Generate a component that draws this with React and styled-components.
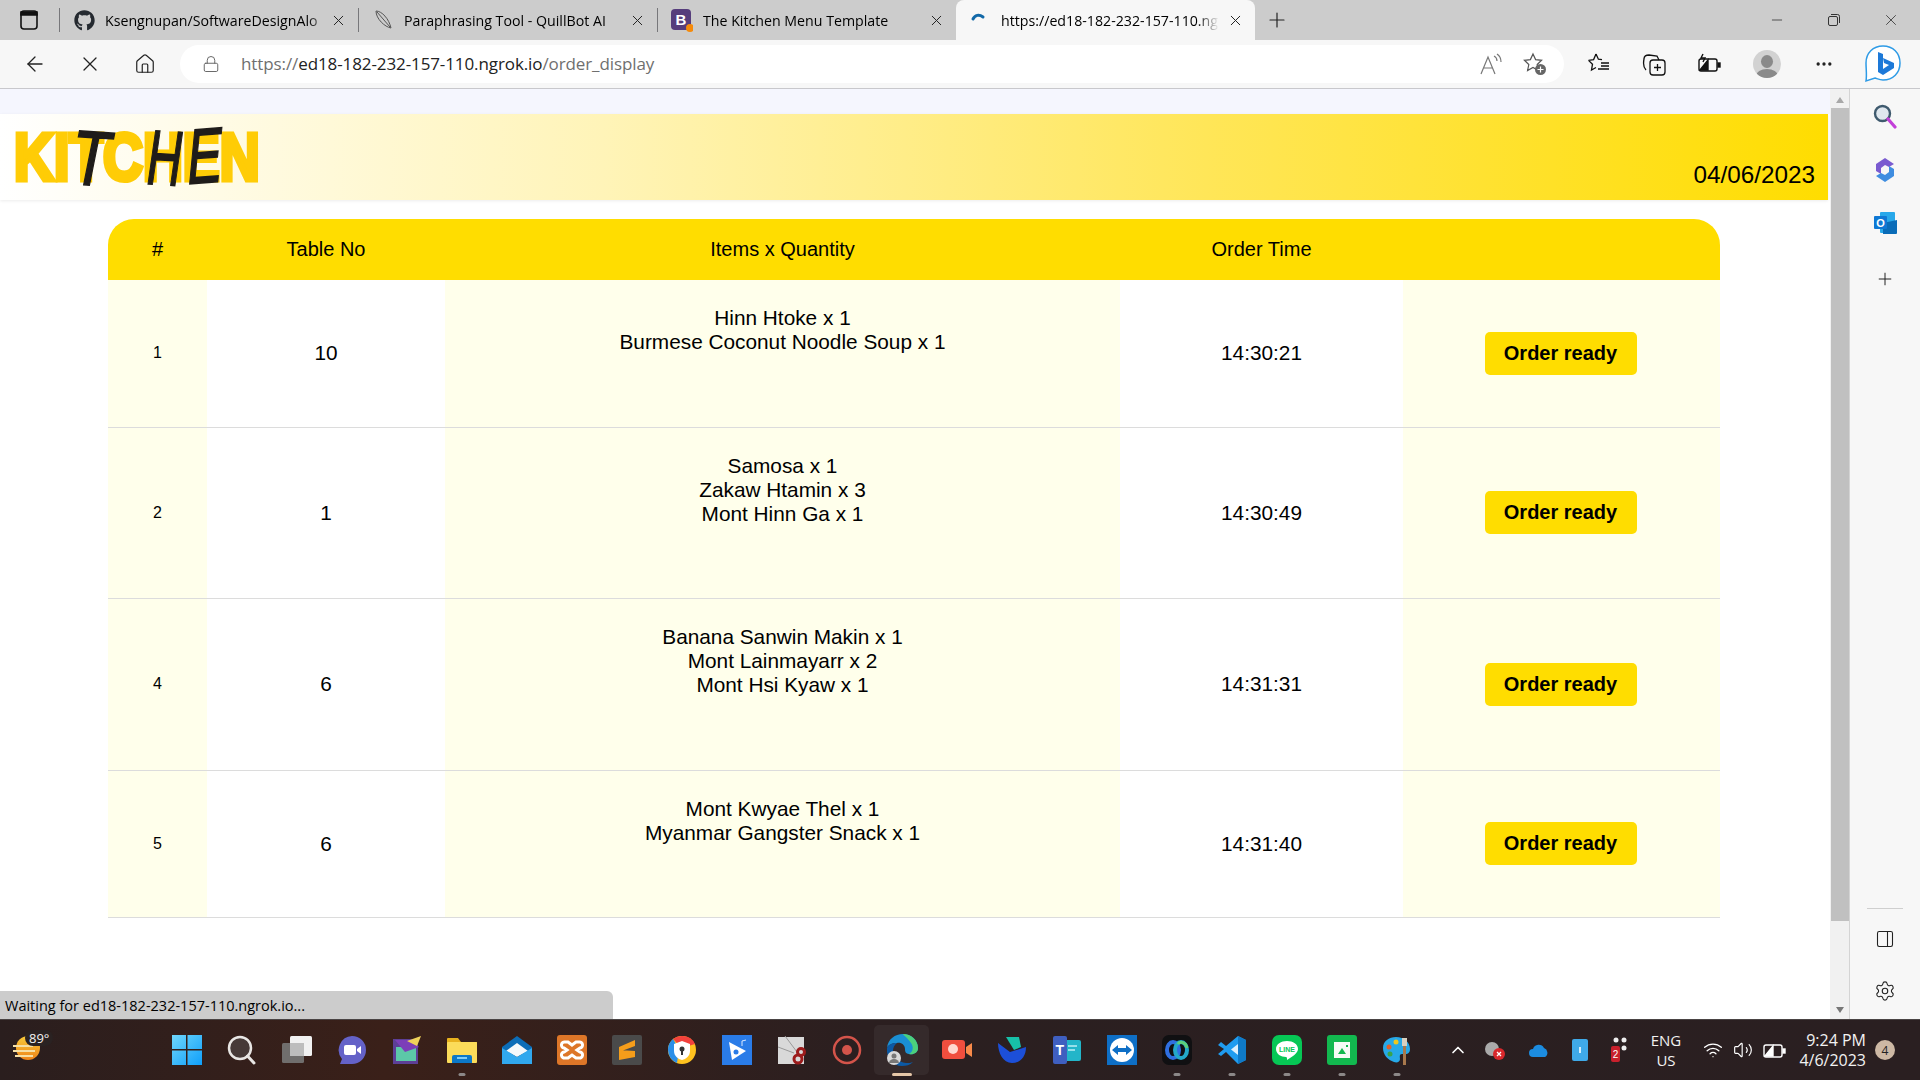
import React from 'react'
import styled, { createGlobalStyle } from 'styled-components'
import { FaGithub } from 'react-icons/fa'
import { ArrowLeft, ChevronUp, House, Lock, Minus, MoreHorizontal, PanelRight, Plus, Settings, Volume2, Wifi, X } from 'lucide-react'

const GlobalStyle = createGlobalStyle`
  html, body {
    margin: 0;
    overflow: hidden;
  }
  body {
    font-family: 'Liberation Sans', Arial, sans-serif;
    color: #000;
  }
  * {
    box-sizing: border-box;
  }
`

const Screen = styled.div`
  display: flex;
  flex-direction: column;
  height: 1080px;
  width: 1920px;
`

/* browser tabs */
const TabStrip = styled.div`
  align-items: stretch;
  background: #cccccc;
  display: flex;
  flex: 0 0 40px;
  font-family: 'Open Sans', sans-serif;
  font-size: 14.2px;
`

const TabPanelButton = styled.div`
  align-items: center;
  display: flex;
  justify-content: center;
  padding-right: 1px;
  width: 59px;
`

const Tab = styled.div`
  align-items: center;
  background: ${({ $active }) => ($active ? '#f7f7f7' : 'transparent')};
  border-left: ${({ $active }) => ($active ? 'none' : '1px solid #77777a')};
  border-radius: ${({ $active }) => ($active ? '8px 8px 0 0' : '0')};
  display: flex;
  margin: ${({ $active }) => ($active ? '0' : '8px 0')};
  padding: 0 11px 0 13px;
  width: 299px;
`

const TabIcon = styled.div`
  align-items: center;
  display: flex;
  flex: 0 0 22px;
  height: 22px;
  justify-content: center;
  margin-right: 10px;
  position: relative;
`

const TabTitle = styled.div`
  flex: 1;
  margin-right: ${({ $narrow }) => ($narrow ? '8px' : '0')};
  overflow: hidden;
  white-space: nowrap;
  -webkit-mask-image: linear-gradient(to right, #000 90%, transparent 100%);
  mask-image: linear-gradient(to right, #000 90%, transparent 100%);
`

const NewTab = styled.div`
  align-items: center;
  display: flex;
  justify-content: center;
  margin-left: 4px;
  width: 36px;
`

const WindowControls = styled.div`
  align-items: center;
  display: flex;
  margin-left: auto;
  padding-right: 1px;
`

const WindowButton = styled.div`
  align-items: center;
  display: flex;
  justify-content: center;
  width: 57px;
`

/* address bar row */
const Toolbar = styled.div`
  align-items: center;
  background: #f7f7f7;
  border-bottom: 1px solid #c8c8cc;
  display: flex;
  flex: 0 0 49px;
  padding-bottom: 1px;
`

const NavButton = styled.div`
  align-items: center;
  display: flex;
  justify-content: center;
  margin-left: ${({ $first }) => ($first ? '7px' : '0')};
  width: 55px;
`

const AddressBar = styled.div`
  align-items: center;
  background: #fff;
  border-radius: 19px;
  display: flex;
  font-family: 'Open Sans', sans-serif;
  font-size: 17px;
  height: 38px;
  margin-left: 8px;
  padding: 0 14px 0 22px;
  width: 1384px;
`

const Url = styled.div`
  color: #6f6f6f;
  flex: 1;
  letter-spacing: -0.1px;
  margin-left: 21px;
  white-space: nowrap;
  b {
    color: #222;
    font-weight: 400;
  }
`

const BarIcon = styled.div`
  align-items: center;
  display: flex;
  justify-content: center;
  margin-left: ${({ $gap }) => $gap || 0}px;
  width: 30px;
`

const ToolIcons = styled.div`
  align-items: center;
  display: flex;
  margin-left: 7px;
`

const ToolIcon = styled.div`
  align-items: center;
  display: flex;
  justify-content: center;
  width: ${({ $width }) => $width || 55}px;
`

const Avatar = styled.div`
  background: #d2d2d2;
  border-radius: 50%;
  height: 28px;
  overflow: hidden;
  position: relative;
  width: 28px;
  &::before {
    background: #8a8a8a;
    border-radius: 50%;
    content: '';
    height: 13px;
    left: 8px;
    position: absolute;
    top: 5px;
    width: 12px;
  }
  &::after {
    background: #8a8a8a;
    border-radius: 50%;
    content: '';
    height: 14px;
    left: 3px;
    position: absolute;
    top: 19px;
    width: 22px;
  }
`

/* middle part: page, scrollbar, edge sidebar */
const Body = styled.div`
  display: flex;
  flex: 1;
  min-height: 0;
`

const Viewport = styled.div`
  background: #fff;
  flex: 0 0 1830px;
  overflow: hidden;
  position: relative;
`

const TopBand = styled.div`
  background: #f5f6fe;
  height: 25px;
`

const PageHeader = styled.header`
  align-items: flex-end;
  background: linear-gradient(to right, #ffffff 0%, #fff4b8 33%, #ffe658 66%, #ffdd00 100%);
  box-shadow: 0 1px 3px rgba(0, 0, 0, 0.08);
  display: flex;
  height: 86px;
  justify-content: space-between;
  padding: 0 13px 11px 14px;
  width: 1828px;
`

const Logo = styled.div`
  height: 86px;
  margin-bottom: -11px;
  position: relative;
  width: 246px;
`

const LogoWord = styled.div`
  color: #ffcc06;
  -webkit-text-stroke: 5px #ffcc06;
  font-size: 67px;
  font-weight: 700;
  left: 0;
  line-height: 48px;
  position: absolute;
  top: 19px;
  transform: scaleX(0.825);
  transform-origin: left top;
  white-space: nowrap;
`

const LogoLetter = styled.span`
  color: #1f1c1a;
  -webkit-text-stroke: 1.5px #1f1c1a;
  font-size: 78px;
  font-style: italic;
  left: ${({ $left }) => $left}px;
  line-height: 60px;
  position: absolute;
  top: 13px;
  transform: scaleX(${({ $squash }) => $squash}) rotate(${({ $turn }) => $turn}deg);
  transform-origin: left center;
`

const DateText = styled.div`
  font-size: 24.3px;
  line-height: 28px;
`

const OrdersTable = styled.table`
  border-collapse: collapse;
  font-size: 20px;
  margin: 19px 0 0 108px;
  table-layout: fixed;
  width: 1612px;
`

const HeadCell = styled.th`
  background: #ffdd00;
  font-weight: 400;
  height: 61px;
  padding: 0;
  text-align: center;
  &:first-child {
    border-top-left-radius: 26px;
  }
  &:last-child {
    border-top-right-radius: 26px;
  }
`

const Row = styled.tr`
  border-bottom: 1px solid #dcdcdc;
`

const Cell = styled.td`
  background: ${({ $tint }) => ($tint ? '#ffffeb' : '#fff')};
  font-size: ${({ $small }) => ($small ? '16px' : '20.8px')};
  padding: 0;
  text-align: center;
`

const ItemsCell = styled(Cell)`
  padding: 26px 0 72.5px;
  vertical-align: top;
`

const ItemLine = styled.div`
  line-height: 24px;
`

const ReadyButton = styled.button`
  background: #ffdd00;
  border: none;
  border-radius: 5px;
  color: #000;
  font-family: 'Liberation Sans', Arial, sans-serif;
  font-size: 20px;
  font-weight: 700;
  height: 43px;
  margin-right: 2px;
  padding: 0;
  width: 152px;
`

const StatusBubble = styled.div`
  align-items: center;
  background: #cccccc;
  border-top-right-radius: 6px;
  bottom: 0;
  display: flex;
  font-family: 'Open Sans', sans-serif;
  font-size: 14.5px;
  height: 28px;
  left: 0;
  padding-left: 5px;
  position: absolute;
  width: 613px;
`

const Scrollbar = styled.div`
  align-items: center;
  background: #f1f1f1;
  display: flex;
  flex: 0 0 19px;
  flex-direction: column;
  padding: 8px 0 6px;
`

const ScrollArrow = styled.div`
  border-left: 4px solid transparent;
  border-right: 4px solid transparent;
  ${({ $down }) => ($down ? 'border-top: 6px solid #777;' : 'border-bottom: 6px solid #a8a8a8;')}
  height: 0;
  width: 0;
`

const ScrollThumb = styled.div`
  background: #c0c0c0;
  height: 813px;
  margin: 5px 0 auto;
  width: 18px;
`

const Sidebar = styled.aside`
  align-items: center;
  background: #f7f7f7;
  border-left: 1px solid #d4d4d4;
  display: flex;
  flex: 1;
  flex-direction: column;
  padding-top: 14px;
`

const SideIcon = styled.div`
  align-items: center;
  display: flex;
  height: 26px;
  justify-content: center;
  margin-bottom: ${({ $gap }) => $gap}px;
  width: 100%;
`

const SideRule = styled.div`
  background: #cfcfcf;
  height: 1px;
  margin: auto 0 17px;
  width: 36px;
`

/* windows taskbar */
const Taskbar = styled.div`
  align-items: center;
  background: linear-gradient(to right, #2a1e1e 0%, #3a2019 20%, #2b1f20 45%, #2a1f21 100%);
  border-top: 1px solid #4a4444;
  color: #f2f2f2;
  display: flex;
  flex: 0 0 60px;
  font-family: 'Open Sans', sans-serif;
  position: relative;
`

const Weather = styled.div`
  flex: 0 0 159px;
  height: 60px;
  padding: 13px 0 0 12px;
  position: relative;
`

const WeatherTemp = styled.span`
  background: #2a2222;
  border-radius: 9px;
  font-size: 13px;
  left: 25px;
  line-height: 16px;
  padding: 0 4px;
  position: absolute;
  top: 10px;
`

const AppSlot = styled.div`
  align-items: center;
  background: ${({ $active }) => ($active ? 'rgba(255,255,255,0.05)' : 'transparent')};
  border-radius: 5px;
  display: flex;
  height: 50px;
  justify-content: center;
  position: relative;
  width: 55px;
`

const RunDot = styled.span`
  background: ${({ $active }) => ($active ? '#e6c7a8' : '#8c8888')};
  border-radius: 2px;
  bottom: -1px;
  height: 3px;
  left: 50%;
  position: absolute;
  transform: translateX(-50%);
  width: ${({ $active }) => ($active ? '20px' : '7px')};
`

const Tray = styled.div`
  align-items: center;
  display: flex;
  margin-left: 24px;
`

const TrayIcon = styled.div`
  align-items: center;
  display: flex;
  justify-content: center;
  width: ${({ $width }) => $width}px;
`

const Lang = styled.div`
  font-size: 15px;
  line-height: 20px;
  margin: 0 12px 0 14px;
  text-align: center;
  width: 40px;
`

const Clock = styled.div`
  font-size: 16px;
  line-height: 20px;
  text-align: right;
  white-space: nowrap;
  width: 76px;
`

const CountBadge = styled.div`
  align-items: center;
  background: #cdb8a4;
  border-radius: 50%;
  color: #222;
  display: flex;
  font-size: 12px;
  height: 20px;
  justify-content: center;
  margin-left: 9px;
  width: 20px;
`

const Win = () => (
  <svg width='30' height='30' viewBox='0 0 30 30'>
    <defs>
      <linearGradient id='win' x1='0' y1='0' x2='1' y2='1'>
        <stop offset='0' stopColor='#6fd6fb' />
        <stop offset='1' stopColor='#0f9ffa' />
      </linearGradient>
    </defs>
    <path fill='url(#win)' d='M0 0h14v14H0zM15.500 0H30v14H15.500zM0 15.500h14V30H0zM15.500 15.500H30V30H15.500z' />
  </svg>
)

const Glass = () => (
  <svg width='30' height='30' viewBox='0 0 30 30'>
    <circle cx='13' cy='13' r='11' fill='#463a38' stroke='#e8e6e4' strokeWidth='2.500' />
    <path d='M20.500 21 27 28' stroke='#e8e6e4' strokeWidth='3' strokeLinecap='round' />
  </svg>
)

const TaskView = () => (
  <svg width='30' height='30' viewBox='0 0 30 30'>
    <rect x='8' y='1' width='22' height='20' rx='1.500' fill='#f1f1f1' />
    <rect x='0' y='8' width='22' height='20' rx='1.500' fill='#777' fillOpacity='0.9' />
    <rect x='8' y='8' width='14' height='13' fill='#bdbdbd' />
  </svg>
)

const Meet = () => (
  <svg width='30' height='30' viewBox='0 0 30 30'>
    <path fill='#6462c8' d='M15 1a14 14 0 0 1 0 28H3l2-5A14 14 0 0 1 15 1z' />
    <rect x='7' y='10' width='12' height='10' rx='2' fill='#fff' />
    <path fill='#fff' d='M20 14l4-3v8l-4-3z' />
  </svg>
)

const PurpleApp = () => (
  <svg width='30' height='30' viewBox='0 0 30 30'>
    <rect x='1' y='4' width='25' height='25' fill='#5d3f96' />
    <rect x='4' y='12' width='20' height='14' fill='#5cc8a8' />
    <path fill='#7c3fb8' d='M3 5h16l8 7-14 5z' />
    <path fill='#f0d25a' d='M15 6l14-5-4 10z' />
  </svg>
)

const Folder = () => (
  <svg width='30' height='30' viewBox='0 0 30 30'>
    <path fill='#e8b21e' d='M0 4a1 1 0 0 1 1-1h10l3 4h16v6H0z' />
    <rect y='7' width='30' height='21' rx='1' fill='#fbdc5a' />
    <path fill='#0b78c8' d='M5 28v-6a2 2 0 0 1 2-2h16a2 2 0 0 1 2 2v6z' />
    <rect x='10' y='22' width='10' height='2' fill='#7fcdf8' />
  </svg>
)

const Mail = () => (
  <svg width='30' height='30' viewBox='0 0 30 30'>
    <path fill='#0c6db8' d='M15 1 30 12v6H0v-6z' />
    <path fill='#f4f8fb' d='M15 8 26 16 15 22 4 16z' />
    <path fill='#31a8ee' d='M0 13l15 9 15-9v16H0z' />
  </svg>
)

const Xampp = () => (
  <svg width='30' height='30' viewBox='0 0 30 30'>
    <rect width='30' height='30' rx='3' fill='#dd7628' />
    <path fill='none' stroke='#fff' strokeWidth='3' d='M8 7h3l4 3 4-3h3a3 3 0 0 1 1 6l-3 2 3 2a3 3 0 0 1-1 6h-3l-4-3-4 3H8a3 3 0 0 1-1-6l3-2-3-2a3 3 0 0 1 1-6z' />
  </svg>
)

const Sublime = () => (
  <svg width='30' height='30' viewBox='0 0 30 30'>
    <rect width='30' height='30' rx='2' fill='#4a4a4a' />
    <path fill='#f59d1a' d='M7 12 23 5v6L7 17zM7 17l16 5-16 3v-5zM7 15l16 1v6L7 19z' />
  </svg>
)

const Avast = () => (
  <svg width='30' height='30' viewBox='0 0 30 30'>
    <circle cx='15' cy='15' r='14' fill='#ffc21f' />
    <path fill='#f2413c' d='M15 1a14 14 0 0 1 13 8L15 13 6 4a14 14 0 0 1 9-3z' />
    <path fill='#2b8fe8' d='M1 15A14 14 0 0 1 6 4l6 10-2 14A14 14 0 0 1 1 15z' />
    <path fill='#fff' d='M15 6l8 3v7c0 5-4 8-8 9-4-1-8-4-8-9V9z' />
    <circle cx='15' cy='14' r='2.500' fill='#333' />
    <rect x='14' y='14' width='2' height='6' fill='#333' />
  </svg>
)

const PlayNote = () => (
  <svg width='30' height='30' viewBox='0 0 30 30'>
    <rect width='30' height='30' fill='#2a7ce8' />
    <path fill='#fff' d='M7 7 24 16 10 25z' />
    <circle cx='14' cy='17' r='2.500' fill='#2a7ce8' />
    <path stroke='#dbe9ff' fill='none' d='M20 6v5M20 6l4-1' />
  </svg>
)

const Snip = () => (
  <svg width='30' height='30' viewBox='0 0 30 30'>
    <rect x='1' y='2' width='26' height='27' fill='#d9d9d9' />
    <path stroke='#999' d='M8 1 20 17M1 12l16 6' />
    <circle cx='21' cy='24' r='4' fill='none' stroke='#9c1c1c' strokeWidth='3' />
    <circle cx='24' cy='17' r='3.500' fill='none' stroke='#9c1c1c' strokeWidth='3' />
  </svg>
)

const Target = () => (
  <svg width='30' height='30' viewBox='0 0 30 30'>
    <circle cx='15' cy='15' r='13' fill='none' stroke='#d4544a' strokeWidth='2.500' />
    <circle cx='15' cy='15' r='5' fill='#d4544a' />
  </svg>
)

const Edge = () => (
  <svg width='34' height='34' viewBox='0 0 34 34'>
    <path fill='#1a8fd4' d='M2 15C3 6 10 1 18 1c8 0 15 6 15 14 0 5-5 7-9 6-4 0-4-4-4-5 0-4-4-7-8-6-5 0-9 2-10 5z' />
    <path fill='#4cd07c' d='M18 1c8 0 15 6 15 14 0 5-5 7-9 6 4-2 5-7 2-11-3-5-8-8-8-9z' />
    <path fill='#0c59a4' d='M2 15c1-3 5-5 10-5-3 2-4 5-4 8 0 6 5 11 13 12 3 0 5 0 7-1-3 3-7 4-11 4C8 33 1 25 2 15z' />
    <circle cx='9' cy='25' r='7' fill='#d9d9d9' />
    <circle cx='9' cy='23' r='2.500' fill='#777' />
    <path fill='#777' d='M4 30a5 4 0 0 1 10 0z' />
  </svg>
)

const Rec = () => (
  <svg width='30' height='30' viewBox='0 0 30 30'>
    <rect x='0' y='5' width='23' height='19' rx='3' fill='#f04e3e' />
    <path fill='#f88a4a' d='M24 12l6-4v14l-6-4z' />
    <circle cx='11' cy='14' r='5' fill='#ffd8d0' />
  </svg>
)

const Wing = () => (
  <svg width='30' height='30' viewBox='0 0 30 30'>
    <path fill='#1c4fd8' d='M1 8l12 9 16-5c0 10-6 16-14 16C6 28 1 18 1 8z' />
    <path fill='#17c0a8' d='M9 2h13l2 10-7 3z' />
  </svg>
)

const TeamsBook = () => (
  <svg width='30' height='30' viewBox='0 0 30 30'>
    <rect x='12' y='5' width='17' height='21' rx='2' fill='#23b5c9' />
    <path stroke='#bdeef5' strokeWidth='1.500' d='M16 11h9M16 15h7' />
    <rect x='1' y='1' width='14' height='28' rx='2' fill='#3f5fc0' />
    <text x='3.500' y='20' fontSize='14' fontWeight='700' fill='#fff' fontFamily='Liberation Sans'>T</text>
  </svg>
)

const TeamViewer = () => (
  <svg width='30' height='30' viewBox='0 0 30 30'>
    <rect width='30' height='30' fill='#0e6fc6' />
    <circle cx='15' cy='15' r='12' fill='#fff' />
    <path fill='#0e6fc6' d='M5 15l6-5v3h8v-3l6 5-6 5v-3h-8v3z' />
  </svg>
)

const Webex = () => (
  <svg width='30' height='30' viewBox='0 0 30 30'>
    <rect width='30' height='30' rx='7' fill='#101012' />
    <ellipse cx='11' cy='15' rx='6' ry='8' fill='none' stroke='#2f6fe0' strokeWidth='4' />
    <ellipse cx='19' cy='15' rx='6' ry='8' fill='none' stroke='#23a8c9' strokeWidth='4' />
    <path fill='none' stroke='#5dcf7a' strokeWidth='3' d='M16 9c2-3 8-2 9 4' />
  </svg>
)

const VsCode = () => (
  <svg width='30' height='30' viewBox='0 0 30 30'>
    <path fill='#1f9cf0' d='M21 1l8 4v20l-8 4L9 17l-5 4-3-2 6-5-6-4 3-3 5 4z' />
    <path fill='#0f7ac8' d='M21 1l8 4v20l-8 4z' />
    <path fill='#fff' fillOpacity='0.85' d='M21 9v11l-7-5.500z' />
  </svg>
)

const Line = () => (
  <svg width='30' height='30' viewBox='0 0 30 30'>
    <rect width='30' height='30' rx='7' fill='#06c755' />
    <path fill='#fff' d='M15 6c6 0 11 3 11 8 0 4-6 8-11 11 0-2 0-3-1-3-5 0-10-3-10-8 0-5 5-8 11-8z' />
    <text x='15' y='17' textAnchor='middle' fontSize='7' fontWeight='700' fill='#06c755' fontFamily='Liberation Sans'>LINE</text>
  </svg>
)

const GreenPic = () => (
  <svg width='30' height='30' viewBox='0 0 30 30'>
    <rect width='30' height='30' rx='3' fill='#12b84f' />
    <rect x='7' y='7' width='16' height='16' fill='#f5fbf6' />
    <path fill='#12b84f' d='M11 19l4-6 4 6z' />
    <rect x='19' y='10' width='2' height='2' fill='#12b84f' />
  </svg>
)

const Palette = () => (
  <svg width='30' height='30' viewBox='0 0 30 30'>
    <path fill='#27a9e8' d='M14 2c8 0 14 5 14 12 0 6-5 5-8 5-3 0-2 3-2 5 0 3-3 4-6 3C6 25 1 20 1 13 1 6 7 2 14 2z' />
    <circle cx='7' cy='12' r='2.500' fill='#e0602c' />
    <circle cx='14' cy='7' r='2.500' fill='#f0c81c' />
    <circle cx='8' cy='19' r='2.500' fill='#3aa44a' />
    <rect x='21' y='9' width='3' height='21' fill='#a8784c' />
    <rect x='20' y='3' width='5' height='8' fill='#d8d0c0' />
  </svg>
)

const taskbarApps = [
  { key: 'win', Art: Win },
  { key: 'search', Art: Glass },
  { key: 'view', Art: TaskView },
  { key: 'meet', Art: Meet },
  { key: 'purple', Art: PurpleApp },
  { key: 'folder', Art: Folder, dot: true },
  { key: 'mail', Art: Mail },
  { key: 'xampp', Art: Xampp },
  { key: 'sublime', Art: Sublime },
  { key: 'avast', Art: Avast },
  { key: 'play', Art: PlayNote },
  { key: 'snip', Art: Snip },
  { key: 'target', Art: Target },
  { key: 'edge', Art: Edge, active: true },
  { key: 'rec', Art: Rec },
  { key: 'wing', Art: Wing },
  { key: 'teams', Art: TeamsBook },
  { key: 'tv', Art: TeamViewer },
  { key: 'webex', Art: Webex, dot: true },
  { key: 'code', Art: VsCode, dot: true },
  { key: 'line', Art: Line, dot: true },
  { key: 'green', Art: GreenPic, dot: true },
  { key: 'paint', Art: Palette, dot: true }
]

const orders = [
  { id: 1, table: 10, items: ['Hinn Htoke x 1', 'Burmese Coconut Noodle Soup x 1'], time: '14:30:21' },
  { id: 2, table: 1, items: ['Samosa x 1', 'Zakaw Htamin x 3', 'Mont Hinn Ga x 1'], time: '14:30:49' },
  { id: 4, table: 6, items: ['Banana Sanwin Makin x 1', 'Mont Lainmayarr x 2', 'Mont Hsi Kyaw x 1'], time: '14:31:31' },
  { id: 5, table: 6, items: ['Mont Kwyae Thel x 1', 'Myanmar Gangster Snack x 1'], time: '14:31:40' }
]

const tabs = [
  {
    title: 'Ksengnupan/SoftwareDesignAlo',
    icon: <FaGithub size={21} color='#24292f' />
  },
  {
    title: 'Paraphrasing Tool - QuillBot AI',
    icon: (
      <svg width='20' height='20' viewBox='0 0 20 20' fill='none' stroke='#555'>
        <path d='M3 1c6 0 13 8 15 17C12 17 3 9 3 1zM4 2l13 15' />
      </svg>
    )
  },
  {
    title: 'The Kitchen Menu Template',
    icon: (
      <svg width='22' height='24' viewBox='0 0 22 24'>
        <rect x='0' y='1' width='20' height='21' rx='4' fill='#563d7c' />
        <text x='10' y='17' textAnchor='middle' fontSize='15' fontWeight='700' fill='#fff' fontFamily='Liberation Sans'>B</text>
        <circle cx='19' cy='20' r='4' fill='#f58a0b' />
      </svg>
    )
  }
]

const App = () => (
  <Screen>
    <GlobalStyle />
    <TabStrip>
      <TabPanelButton>
        <svg width='18' height='20' viewBox='0 0 18 20' fill='none' stroke='#111' strokeWidth='1.600'>
          <rect x='1' y='1' width='16' height='18' rx='3' />
          <path d='M1 5h16V2H1z' fill='#111' />
        </svg>
      </TabPanelButton>
      {tabs.map(({ title, icon }) => (
        <Tab key={title}>
          <TabIcon>{icon}</TabIcon>
          <TabTitle>{title}</TabTitle>
          <X size={17} color='#222' strokeWidth={1.4} />
        </Tab>
      ))}
      <Tab $active>
        <TabIcon>
          <svg width='20' height='20' viewBox='0 0 20 20' fill='none'>
            <path d='M3 9c2-4 6-5 10-2' stroke='#1269a8' strokeWidth='3' strokeLinecap='round' />
          </svg>
        </TabIcon>
        <TabTitle $narrow>https://ed18-182-232-157-110.ngrok.io/order_display</TabTitle>
        <X size={17} color='#222' strokeWidth={1.4} />
      </Tab>
      <NewTab><Plus size={24} color='#222' strokeWidth={1.2} /></NewTab>
      <WindowControls>
        <WindowButton><Minus size={16} color='#333' strokeWidth={1.2} /></WindowButton>
        <WindowButton>
          <svg width='14' height='14' viewBox='0 0 14 14' fill='none' stroke='#333'>
            <rect x='1.500' y='3.500' width='9' height='9' rx='1.500' />
            <path d='M4 1.500h6.500a2 2 0 0 1 2 2V10' />
          </svg>
        </WindowButton>
        <WindowButton><X size={18} color='#333' strokeWidth={1.1} /></WindowButton>
      </WindowControls>
    </TabStrip>

    <Toolbar>
      <NavButton $first><ArrowLeft size={24} color='#222' strokeWidth={1.3} /></NavButton>
      <NavButton><X size={24} color='#222' strokeWidth={1.3} /></NavButton>
      <NavButton><House size={22} color='#222' strokeWidth={1.3} /></NavButton>
      <AddressBar>
        <Lock size={18} color='#666' strokeWidth={1.3} />
        <Url>https://<b>ed18-182-232-157-110.ngrok.io</b>/order_display</Url>
        <BarIcon>
          <svg width='24' height='24' viewBox='0 0 24 24' fill='none' stroke='#777' strokeWidth='1.200'>
            <path d='M2 22 9 5l7 17M5 16h8M15 4c2 1 3 3 3 5M18 2c3 2 4 5 4 8' />
          </svg>
        </BarIcon>
        <BarIcon $gap={14}>
          <svg width='24' height='24' viewBox='0 0 24 24' fill='none' stroke='#555' strokeWidth='1.200'>
            <path d='M10 2l2.600 5.600 6 .7-4.400 4.200 1.200 6-5.400-3-5.400 3 1.200-6L1.400 8.300l6-.7z' />
            <circle cx='17.500' cy='17.500' r='5.500' fill='#666' stroke='none' />
            <path d='M17.500 14.500v6M14.500 17.500h6' stroke='#fff' />
          </svg>
        </BarIcon>
      </AddressBar>
      <ToolIcons>
        <ToolIcon>
          <svg width='24' height='24' viewBox='0 0 24 24' fill='none' stroke='#111' strokeWidth='1.300'>
            <path d='M9 2l2.400 5.200 3.600.5M1.500 8.400l5.100-.8L9 2M1.500 8.400l4 3.800-1 5.800 4.500-2.500M14 11h8M14 14h8M11 17h11' />
          </svg>
        </ToolIcon>
        <ToolIcon>
          <svg width='24' height='24' viewBox='0 0 24 24' fill='none' stroke='#111' strokeWidth='1.300'>
            <rect x='8' y='8' width='15' height='15' rx='3' />
            <path d='M4 18C2 16 1 12 2 7c0-3 2-4 5-4l8 1 2 4M15.500 12v7M12 15.500h7' />
          </svg>
        </ToolIcon>
        <ToolIcon>
          <svg width='24' height='22' viewBox='0 0 24 22' fill='none' stroke='#111' strokeWidth='1.400'>
            <rect x='2' y='6' width='18' height='12' rx='2' />
            <rect x='21' y='10' width='2' height='4' fill='#111' />
            <path d='M3 17l8-10v10z' fill='#111' />
            <path d='M6 1l-2 4 4 0-2 4' />
          </svg>
        </ToolIcon>
        <ToolIcon $width={62}><Avatar /></ToolIcon>
        <ToolIcon $width={52}><MoreHorizontal size={20} color='#222' strokeWidth={2} /></ToolIcon>
        <ToolIcon $width={66}>
          <svg width='38' height='40' viewBox='0 0 38 40' fill='none'>
            <path d='M19 2C9 2 2 9 2 19c0 6 1 12 0 18l9-3c3 1 5 2 8 2 10 0 17-7 17-17S29 2 19 2z' fill='#fff' stroke='#2e9be6' strokeWidth='1.500' />
            <path d='M14 8l5 2v15l6-4-5-2-1-5 11 5v5l-11 7-5-3z' fill='#1d79d8' />
          </svg>
        </ToolIcon>
      </ToolIcons>
    </Toolbar>

    <Body>
      <Viewport>
        <TopBand />
        <PageHeader>
          <Logo>
            <LogoWord>KITCHEN</LogoWord>
            <LogoLetter $left={58} $turn={3} $squash={0.8}>T</LogoLetter>
            <LogoLetter $left={133} $turn={2} $squash={0.62}>H</LogoLetter>
            <LogoLetter $left={173} $turn={-3} $squash={0.68}>E</LogoLetter>
          </Logo>
          <DateText>04/06/2023</DateText>
        </PageHeader>
        <OrdersTable>
          <colgroup>
            <col style={{ width: 99 }} />
            <col style={{ width: 238 }} />
            <col style={{ width: 675 }} />
            <col style={{ width: 283 }} />
            <col style={{ width: 317 }} />
          </colgroup>
          <thead>
            <tr>
              <HeadCell>#</HeadCell>
              <HeadCell>Table No</HeadCell>
              <HeadCell>Items x Quantity</HeadCell>
              <HeadCell>Order Time</HeadCell>
              <HeadCell />
            </tr>
          </thead>
          <tbody>
            {orders.map(({ id, table, items, time }) => (
              <Row key={id}>
                <Cell $tint $small>{id}</Cell>
                <Cell>{table}</Cell>
                <ItemsCell $tint>
                  {items.map((item) => <ItemLine key={item}>{item}</ItemLine>)}
                </ItemsCell>
                <Cell>{time}</Cell>
                <Cell $tint><ReadyButton>Order ready</ReadyButton></Cell>
              </Row>
            ))}
          </tbody>
        </OrdersTable>
        <StatusBubble>Waiting for ed18-182-232-157-110.ngrok.io...</StatusBubble>
      </Viewport>
      <Scrollbar>
        <ScrollArrow />
        <ScrollThumb />
        <ScrollArrow $down />
      </Scrollbar>
      <Sidebar>
        <SideIcon $gap={28}>
          <svg width='26' height='26' viewBox='0 0 26 26' fill='none'>
            <circle cx='10.500' cy='10.500' r='7.500' fill='#dfe7ee' stroke='#3f5a6e' strokeWidth='2.400' />
            <path d='M16 16l7 8' stroke='#c23fd8' strokeWidth='3.200' strokeLinecap='round' />
          </svg>
        </SideIcon>
        <SideIcon $gap={27}>
          <svg width='24' height='26' viewBox='0 0 24 26'>
            <path fill='#7a5bd0' d='M12 1l9 6-5 3-4-2-4 3v6l-5-3V7z' />
            <path fill='#3f8de0' d='M12 25l-9-6 5-3 4 2 4-3V9l5 3v7z' />
          </svg>
        </SideIcon>
        <SideIcon $gap={30}>
          <svg width='24' height='24' viewBox='0 0 24 24'>
            <rect x='7' y='1' width='15' height='21' rx='1' fill='#28a8ea' />
            <path fill='#0a6cb8' d='M10 12l14-3v13a1 1 0 0 1-1 1H10z' />
            <rect x='1' y='5' width='13' height='13' rx='1' fill='#0f78d4' />
            <text x='7.500' y='15.500' textAnchor='middle' fontSize='11' fontWeight='700' fill='#fff' fontFamily='Liberation Sans'>O</text>
          </svg>
        </SideIcon>
        <SideIcon $gap={0}>
          <Plus size={20} color='#222' strokeWidth={1.2} />
        </SideIcon>
        <SideRule />
        <SideIcon $gap={26}>
          <PanelRight size={20} color='#222' strokeWidth={1.3} />
        </SideIcon>
        <SideIcon $gap={15}>
          <Settings size={22} color='#222' strokeWidth={1.2} />
        </SideIcon>
      </Sidebar>
    </Body>

    <Taskbar>
      <Weather>
        <svg width='30' height='30' viewBox='0 0 30 30'>
          <defs>
            <linearGradient id='sun' x1='0' y1='0' x2='0' y2='1'>
              <stop offset='0' stopColor='#f8c93a' />
              <stop offset='1' stopColor='#ee8418' />
            </linearGradient>
          </defs>
          <circle cx='16' cy='15' r='12' fill='url(#sun)' />
          <path d='M1 13h20M1 18h22M3 23h18' stroke='#f6dfa4' strokeWidth='2' />
        </svg>
        <WeatherTemp>89°</WeatherTemp>
      </Weather>
      {taskbarApps.map(({ key, Art, dot, active }) => (
        <AppSlot key={key} $active={active}>
          <Art />
          {(dot || active) && <RunDot $active={active} />}
        </AppSlot>
      ))}
      <Tray>
        <TrayIcon $width={20}><ChevronUp size={22} color='#fff' strokeWidth={2} /></TrayIcon>
        <TrayIcon $width={56}>
          <svg width='24' height='22' viewBox='0 0 24 22'>
            <circle cx='8' cy='10' r='7' fill='#aaa' />
            <circle cx='15' cy='15' r='6' fill='#d8282c' />
            <path d='M13 13l4 4M17 13l-4 4' stroke='#fff' strokeWidth='1.300' />
          </svg>
        </TrayIcon>
        <TrayIcon $width={30}>
          <svg width='22' height='16' viewBox='0 0 22 16'>
            <path fill='#1c8ce0' d='M5 15a4 4 0 0 1 0-8 6 6 0 0 1 11-1 5 5 0 0 1 1 9z' />
          </svg>
        </TrayIcon>
        <TrayIcon $width={52}>
          <svg width='20' height='24' viewBox='0 0 20 24'>
            <rect x='2' y='1' width='16' height='22' rx='2' fill='#3fa9e8' />
            <rect x='9' y='9' width='2' height='6' fill='#d5eefc' />
          </svg>
        </TrayIcon>
        <TrayIcon $width={26}>
          <svg width='20' height='26' viewBox='0 0 20 26'>
            <circle cx='7' cy='3' r='2.500' fill='#eee' />
            <circle cx='15' cy='3' r='2.500' fill='#eee' />
            <circle cx='15' cy='11' r='2.500' fill='#eee' />
            <rect x='2' y='9' width='9' height='16' rx='2' fill='#c8202c' />
            <text x='6.500' y='21' textAnchor='middle' fontSize='10' fill='#fff' fontFamily='Liberation Sans'>2</text>
          </svg>
        </TrayIcon>
        <Lang>ENG<br />US</Lang>
        <TrayIcon $width={30}><Wifi size={20} color='#fff' strokeWidth={1.6} /></TrayIcon>
        <TrayIcon $width={30}><Volume2 size={20} color='#fff' strokeWidth={1.4} /></TrayIcon>
        <TrayIcon $width={32}>
          <svg width='24' height='22' viewBox='0 0 24 22' fill='none' stroke='#fff' strokeWidth='1.400'>
            <rect x='2' y='6' width='18' height='12' rx='2' />
            <rect x='21' y='10' width='2' height='4' fill='#fff' />
            <path d='M3 17l8-10v10z' fill='#fff' />
          </svg>
        </TrayIcon>
        <Clock>9:24 PM<br />4/6/2023</Clock>
        <CountBadge>4</CountBadge>
      </Tray>
    </Taskbar>
  </Screen>
)

export default App
